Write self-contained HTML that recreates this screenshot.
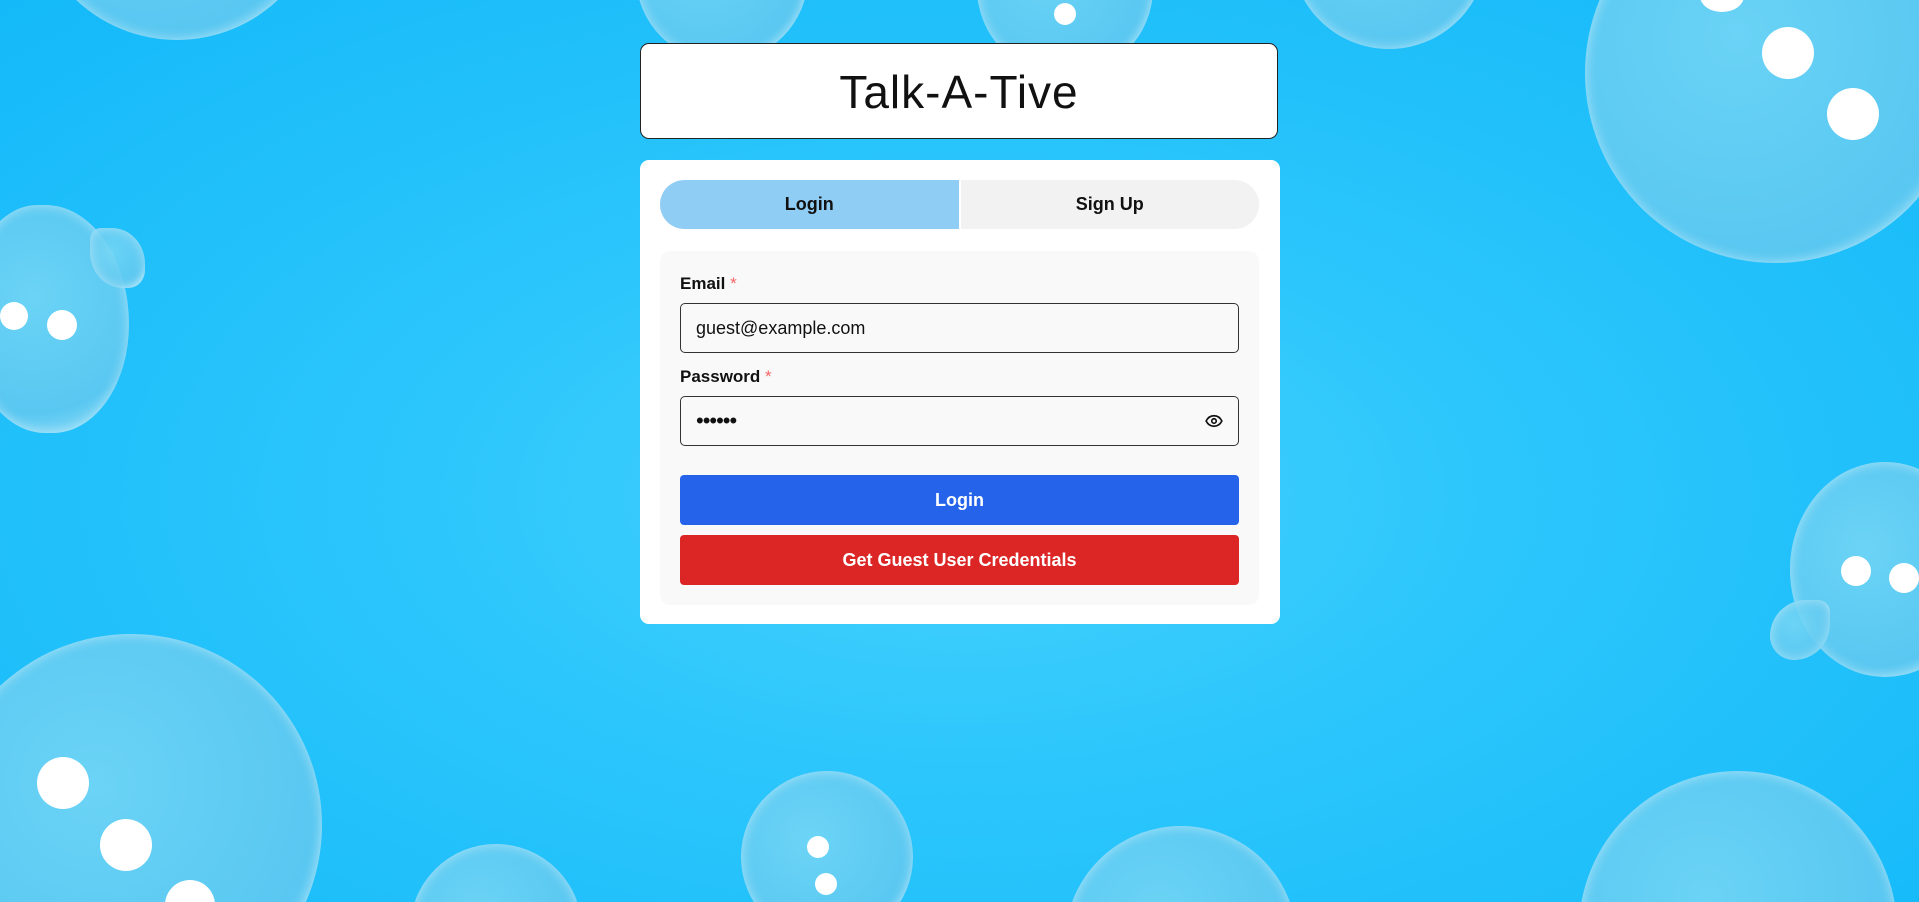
<!DOCTYPE html>
<html><head><meta charset="utf-8"><style>
html,body{margin:0;padding:0;width:1919px;height:902px;overflow:hidden}
body{position:relative;font-family:"Liberation Sans",sans-serif;background:radial-gradient(ellipse at 50% 55%,#45d2fd 0%,#2cc6fc 40%,#14b9f9 100%)}
.b{position:absolute;border-radius:50%;background:radial-gradient(circle at 40% 40%,rgba(120,215,245,.85),rgba(95,200,240,.9) 70%,rgba(170,230,250,.95) 100%);box-shadow:inset 0 0 12px rgba(255,255,255,.5)}
.d{position:absolute;border-radius:50%;background:#fff}
.hdr{position:absolute;left:640px;top:43px;width:638px;height:96px;background:#fff;border:1px solid #222;border-radius:9px;display:flex;align-items:center;justify-content:center;font-size:46px;color:#111;font-family:"Liberation Sans",sans-serif;letter-spacing:1px;padding-top:2px;box-sizing:border-box}
.card{position:absolute;left:640px;top:160px;width:640px;height:464px;background:#fff;border-radius:9px}
.tabs{position:absolute;left:20px;top:20px;width:599px;height:49px;border-radius:25px;overflow:hidden;display:flex;font-size:18px;font-weight:bold;color:#111}
.tabs div{flex:1;display:flex;align-items:center;justify-content:center}
.panel{position:absolute;left:20px;top:91px;width:599px;height:354px;background:#f9f9f9;border-radius:10px}
.lab{position:absolute;left:20px;font-size:17px;font-weight:bold;color:#111}
.lab span{color:#f56565;font-weight:normal}
.inp{position:absolute;left:20px;height:48px;border:1px solid #333;border-radius:5px;background:#f9f9f9;font-size:18px;color:#111;display:flex;align-items:center;padding-left:15px;box-sizing:content-box;width:542px}
.btn{position:absolute;left:20px;width:559px;height:50px;border-radius:4px;color:#fff;font-size:18px;font-weight:bold;display:flex;align-items:center;justify-content:center}
</style></head><body>
<div class="b" style="left:30px;top:-254px;width:294px;height:294px"></div>
<div class="b" style="left:636px;top:-110px;width:172px;height:172px"></div>
<div class="b" style="left:977px;top:-100px;width:176px;height:176px"></div><div class="d" style="left:1054px;top:3px;width:22px;height:22px"></div>
<div class="b" style="left:1291px;top:-147px;width:196px;height:196px"></div>
<div class="b" style="left:1585px;top:-117px;width:380px;height:380px"></div>
<div class="d" style="left:1762px;top:27px;width:52px;height:52px"></div><div class="d" style="left:1827px;top:88px;width:52px;height:52px"></div><div class="d" style="left:1700px;top:-20px;width:44px;height:32px"></div>
<div class="b" style="left:-31px;top:205px;width:160px;height:228px;border-radius:45% 55% 50% 50%"></div>
<div class="b" style="left:90px;top:228px;width:55px;height:60px;border-radius:20% 60% 30% 60%"></div>
<div class="d" style="left:0;top:302px;width:28px;height:28px"></div><div class="d" style="left:47px;top:310px;width:30px;height:30px"></div>
<div class="b" style="left:1790px;top:462px;width:190px;height:215px"></div>
<div class="b" style="left:1770px;top:600px;width:60px;height:60px;border-radius:60% 20% 60% 40%"></div>
<div class="d" style="left:1841px;top:556px;width:30px;height:30px"></div><div class="d" style="left:1889px;top:563px;width:30px;height:30px"></div>
<div class="b" style="left:-60px;top:634px;width:382px;height:382px"></div>
<div class="d" style="left:37px;top:757px;width:52px;height:52px"></div><div class="d" style="left:100px;top:819px;width:52px;height:52px"></div><div class="d" style="left:165px;top:880px;width:50px;height:50px"></div>
<div class="b" style="left:410px;top:844px;width:172px;height:172px"></div>
<div class="b" style="left:741px;top:771px;width:172px;height:172px"></div>
<div class="d" style="left:807px;top:836px;width:22px;height:22px"></div><div class="d" style="left:815px;top:873px;width:22px;height:22px"></div>
<div class="b" style="left:1065px;top:826px;width:232px;height:232px"></div>
<div class="b" style="left:1579px;top:771px;width:318px;height:318px"></div>

<div class="hdr">Talk-A-Tive</div>
<div class="card">
 <div class="tabs"><div style="background:#90cdf4">Login</div><div style="background:#f2f2f2;border-left:2px solid #fff">Sign Up</div></div>
 <div class="panel">
  <div class="lab" style="top:23px">Email <span>*</span></div>
  <div class="inp" style="top:52px">guest@example.com</div>
  <div class="lab" style="top:116px">Password <span>*</span></div>
  <div class="inp" style="top:145px;font-size:22px;letter-spacing:-1px">••••••
   <svg style="position:absolute;right:14px;top:15px" width="20" height="18" viewBox="0 0 24 24" fill="none" stroke="#111" stroke-width="2.2"><path d="M1.5 12C4 7 8 5 12 5s8 2 10.5 7C20 17 16 19 12 19S4 17 1.5 12z"/><circle cx="12" cy="12" r="3"/></svg></div>
  <div class="btn" style="top:224px;background:#2563eb">Login</div>
  <div class="btn" style="top:284px;background:#dc2626">Get Guest User Credentials</div>
 </div>
</div>
</body></html>
